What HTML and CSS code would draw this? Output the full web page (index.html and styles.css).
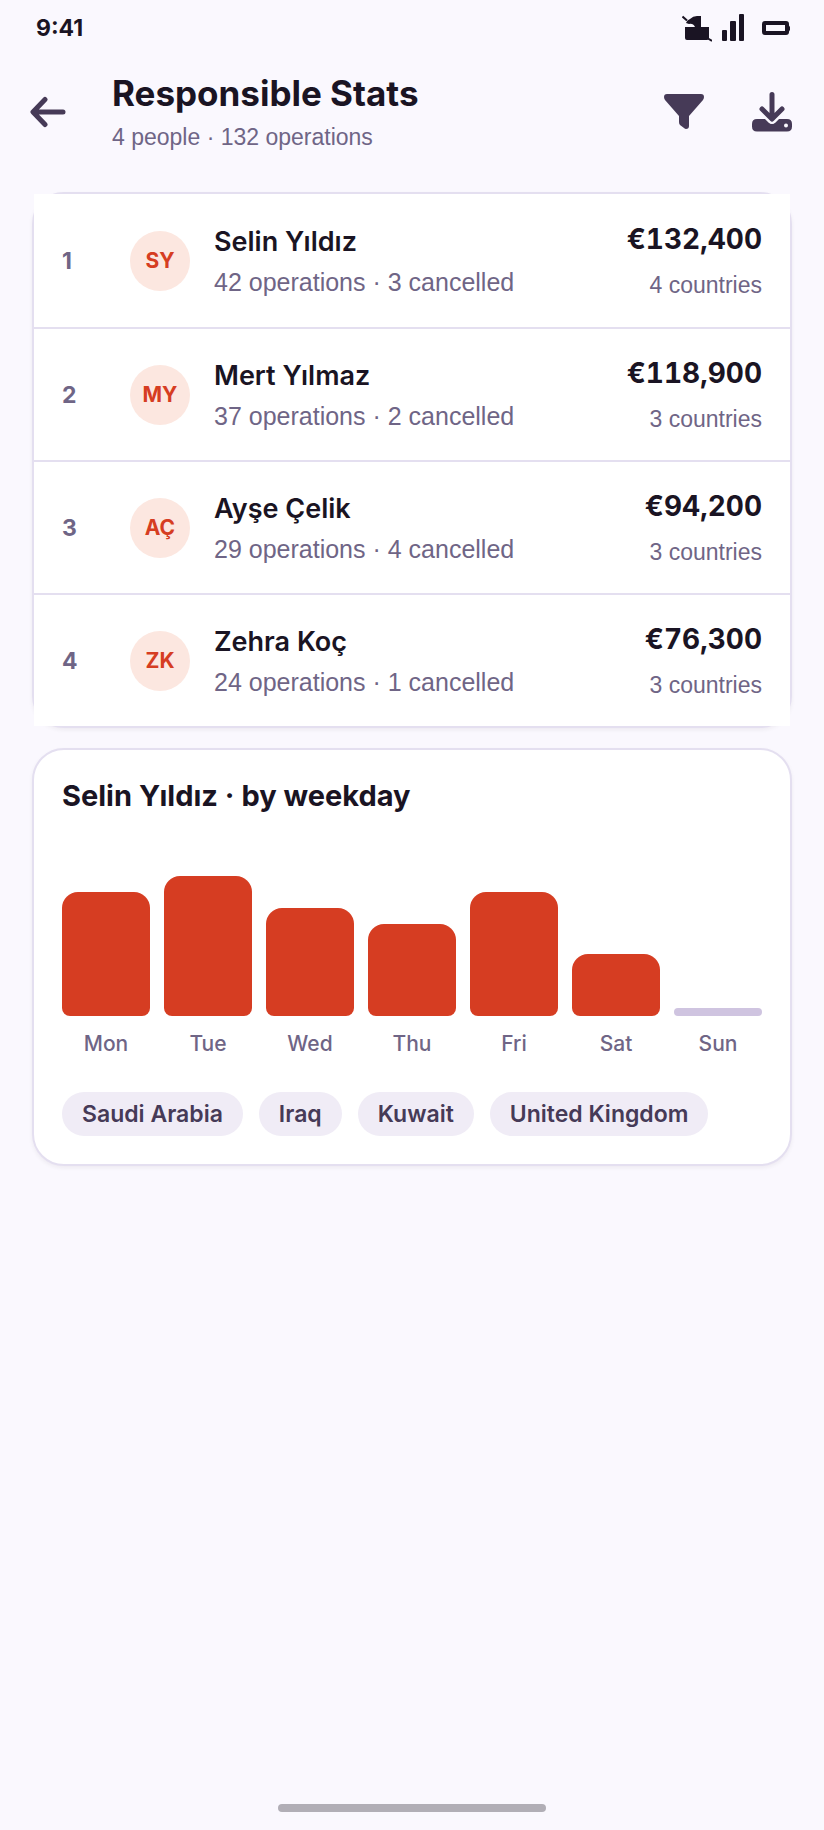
FILE: index.html
```html
<!DOCTYPE html>
<html lang="en">
<head>
  <meta charset="UTF-8">
  <meta name="viewport" content="width=device-width, initial-scale=1.0">
  <title>Responsible Stats</title>
  <link rel="stylesheet" href="styles.css">
</head>
<body>
  <div class="status-bar">
    <span class="clock">9:41</span>
    <div class="status-icons">
      <svg width="30" height="28" viewBox="0 0 30 28" fill="currentColor" aria-hidden="true">
        <path d="M0.500 2.500L5 6.500M26 24.500l4 2.500" stroke="currentColor" stroke-width="2"/>
        <path d="M4 9Q5 6 8 5Q11 2 15 2H19V13H27V24Q27 26 25 26H5Q3 26 3 24V13H13Q11 9 7 10Z"/>
      </svg>
      <svg width="22" height="28" viewBox="0 0 22 28" fill="currentColor" aria-hidden="true">
        <rect x="0" y="16" width="5" height="11" rx="1"/>
        <rect x="8" y="7" width="6" height="20" rx="1"/>
        <rect x="17" y="0" width="5" height="27" rx="1"/>
      </svg>
      <svg class="battery" width="28" height="28" viewBox="0 0 28 28" fill="none" aria-hidden="true">
        <rect x="2" y="9" width="23" height="10" rx="1" stroke="currentColor" stroke-width="4"/>
        <path d="M26 10l2 3v3l-2 3z" fill="currentColor"/>
      </svg>
    </div>
  </div>

  <header class="top-bar">
    <button class="icon-btn back" type="button" aria-label="Back">
      <svg width="36" height="32" viewBox="0 0 36 32" fill="none" stroke="currentColor" stroke-width="5" stroke-linecap="round" stroke-linejoin="round">
        <path d="M15 3.500L3 16l12 12.500M4 16h29"/>
      </svg>
    </button>
    <div class="heading">
      <h1>Responsible Stats</h1>
      <p>4 people · 132 operations</p>
    </div>
    <div class="actions">
      <button class="icon-btn" type="button" aria-label="Filter">
        <svg width="40" height="40" viewBox="0 0 40 40" fill="currentColor">
          <path d="M3 2h34q3 0 3 3 0 1.500-1 3L25 24v10q0 3-3 3-1 0-2-1l-4-3q-1-1-1-3v-6L1 8Q0 6.500 0 5q0-3 3-3z"/>
        </svg>
      </button>
      <button class="icon-btn" type="button" aria-label="Download">
        <svg width="40" height="40" viewBox="0 0 40 40">
          <path d="M5 27h8l3.500 3.500q3.500 3 7 0L27 27h8q5 0 5 5v2.500q0 5-5 5H5q-5 0-5-5V32q0-5 5-5z" fill="currentColor"/>
          <path d="M20 3V26M10 17l10 10 10-10" fill="none" stroke="#faf8fe" stroke-width="9" stroke-linejoin="round"/>
          <path d="M20 2.500V26M10 17l10 10 10-10" fill="none" stroke="currentColor" stroke-width="5" stroke-linecap="round" stroke-linejoin="round"/>
          <circle cx="34" cy="33.500" r="2" fill="#faf8fe"/>
        </svg>
      </button>
    </div>
  </header>

  <main>
    <ol class="card people">
      <li class="person">
        <span class="rank">1</span>
        <span class="avatar">SY</span>
        <div class="info">
          <h2>Selin Yıldız</h2>
          <p>42 operations · 3 cancelled</p>
        </div>
        <div class="total">
          <strong>€132,400</strong>
          <span>4 countries</span>
        </div>
      </li>
      <li class="person">
        <span class="rank">2</span>
        <span class="avatar">MY</span>
        <div class="info">
          <h2>Mert Yılmaz</h2>
          <p>37 operations · 2 cancelled</p>
        </div>
        <div class="total">
          <strong>€118,900</strong>
          <span>3 countries</span>
        </div>
      </li>
      <li class="person">
        <span class="rank">3</span>
        <span class="avatar">AÇ</span>
        <div class="info">
          <h2>Ayşe Çelik</h2>
          <p>29 operations · 4 cancelled</p>
        </div>
        <div class="total">
          <strong>€94,200</strong>
          <span>3 countries</span>
        </div>
      </li>
      <li class="person">
        <span class="rank">4</span>
        <span class="avatar">ZK</span>
        <div class="info">
          <h2>Zehra Koç</h2>
          <p>24 operations · 1 cancelled</p>
        </div>
        <div class="total">
          <strong>€76,300</strong>
          <span>3 countries</span>
        </div>
      </li>
    </ol>

    <section class="card weekday">
      <h2>Selin Yıldız · by weekday</h2>
      <div class="chart">
        <div class="day"><div class="bar" style="height: 124px"></div><span>Mon</span></div>
        <div class="day"><div class="bar" style="height: 140px"></div><span>Tue</span></div>
        <div class="day"><div class="bar" style="height: 108px"></div><span>Wed</span></div>
        <div class="day"><div class="bar" style="height: 92px"></div><span>Thu</span></div>
        <div class="day"><div class="bar" style="height: 124px"></div><span>Fri</span></div>
        <div class="day"><div class="bar" style="height: 62px"></div><span>Sat</span></div>
        <div class="day"><div class="bar empty" style="height: 8px"></div><span>Sun</span></div>
      </div>
      <div class="chips">
        <span class="chip">Saudi Arabia</span>
        <span class="chip">Iraq</span>
        <span class="chip">Kuwait</span>
        <span class="chip">United Kingdom</span>
      </div>
    </section>
  </main>

  <div class="home-bar"></div>
</body>
</html>
```

FILE: styles.css
```css
* { box-sizing: border-box; margin: 0; padding: 0; }
body {
  display: flex;
  flex-direction: column;
  min-height: 100vh;
  background: #faf8fe;
  color: #1a1423;
  font-family: Inter, "Liberation Sans", sans-serif;
}

/* status bar */
.status-bar {
  display: flex;
  align-items: center;
  justify-content: space-between;
  height: 56px;
  padding: 0 34px 0 36px;
}
.clock {
  font-size: 23px;
  font-weight: 700;
}
.status-icons {
  display: flex;
  gap: 10px;
}
.battery { margin-left: 8px; }

/* header */
.top-bar {
  display: flex;
  align-items: center;
  height: 112px;
  padding: 0 32px 0 30px;
}
.icon-btn {
  display: flex;
  background: none;
  border: none;
  color: #463a57;
  cursor: pointer;
}
.heading {
  flex: 1;
  margin-left: 46px;
}
.heading h1 {
  font-size: 35px;
  line-height: 44px;
  font-weight: 700;
}
.heading p {
  margin-top: 6px;
  font-family: "Liberation Sans", Arial, sans-serif;
  font-size: 23px;
  line-height: 32px;
  color: #6f6586;
}
.actions {
  display: flex;
  gap: 48px;
}

main {
  display: flex;
  flex-direction: column;
  gap: 20px;
  padding: 24px 32px;
}
.card {
  background: #fff;
  border: 2px solid #e4dff0;
  border-radius: 32px;
  box-shadow: 0 2px 4px rgba(26, 20, 35, 0.06);
}

/* people list */
.people { list-style: none; }
.person {
  display: flex;
  align-items: center;
  height: 133px;
  padding: 0 28px;
  background: #fff;
}
.person + .person { border-top: 2px solid #e4dff0; }
.rank {
  width: 68px;
  font-size: 23px;
  font-weight: 700;
  color: #6f6586;
}
.avatar {
  display: flex;
  align-items: center;
  justify-content: center;
  width: 60px;
  height: 60px;
  border-radius: 50%;
  background: #fce7e0;
  color: #d63d22;
  font-size: 21px;
  font-weight: 700;
}
.info {
  flex: 1;
  margin-left: 24px;
}
.info h2 {
  font-size: 27px;
  line-height: 36px;
  font-weight: 600;
}
.info p {
  margin-top: 6px;
  font-family: "Liberation Sans", Arial, sans-serif;
  font-size: 25px;
  line-height: 32px;
  color: #6f6586;
}
.total {
  display: flex;
  flex-direction: column;
  align-items: flex-end;
}
.total strong {
  font-size: 28px;
  line-height: 36px;
  font-variant-numeric: tabular-nums;
}
.total span {
  margin-top: 12px;
  font-family: "Liberation Sans", Arial, sans-serif;
  font-size: 23px;
  line-height: 32px;
  color: #6f6586;
}

/* weekday chart */
.weekday { padding: 28px; }
.weekday h2 {
  font-size: 29px;
  line-height: 36px;
  font-weight: 700;
}
.chart {
  display: flex;
  align-items: flex-end;
  gap: 14px;
  margin-top: 62px;
}
.day {
  flex: 1;
  text-align: center;
}
.day span {
  display: block;
  margin-top: 12px;
  font-size: 21px;
  line-height: 32px;
  font-weight: 500;
  color: #6f6586;
}
.bar {
  background: #d63d22;
  border-radius: 16px 16px 8px 8px;
}
.bar.empty {
  background: #cfc4e0;
  border-radius: 4px;
}
.chips {
  display: flex;
  flex-wrap: wrap;
  gap: 16px;
  margin-top: 32px;
}
.chip {
  padding: 0 20px;
  border-radius: 22px;
  background: #f0ecf6;
  color: #463a57;
  font-size: 23px;
  line-height: 44px;
  font-weight: 600;
}

.home-bar {
  width: 268px;
  height: 8px;
  margin: auto auto 18px;
  border-radius: 4px;
  background: #b1aeb6;
}
```
